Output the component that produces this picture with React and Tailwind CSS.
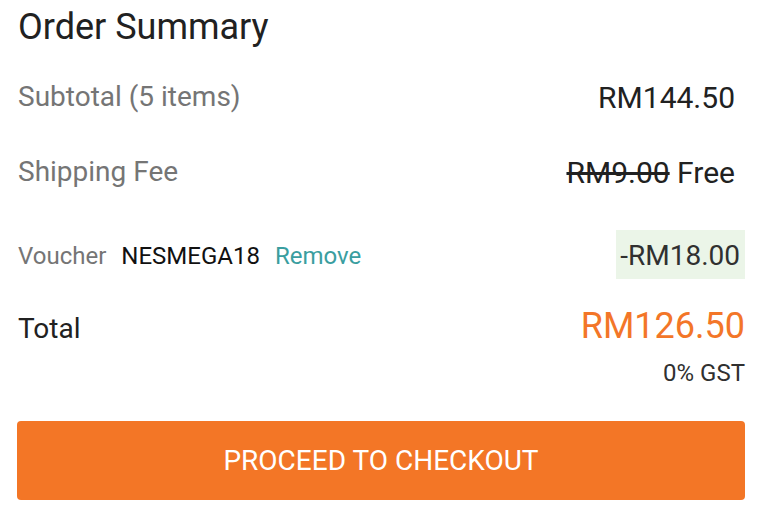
export default function App() {
  return (
    <div className="w-[761px] h-[516px] bg-white overflow-hidden pl-[17px] pr-[16px]" style={{ fontFamily: "Roboto, 'Noto Sans', sans-serif" }}>
      <h1 className="text-[36px] leading-[54px] text-[#212121] pl-[1px]">Order Summary</h1>
      <div className="mt-[28px] h-[30px] flex items-center justify-between pl-[1px] pr-[10px]">
        <span className="text-[28px] text-[#757575]">Subtotal (5 items)</span>
        <span className="text-[30px] text-[#212121]">RM144.50</span>
      </div>
      <div className="mt-[45px] h-[30px] flex items-center justify-between pl-[1px] pr-[10px]">
        <span className="text-[28px] text-[#757575]">Shipping Fee</span>
        <span className="text-[30px] text-[#212121]"><span className="line-through">RM9.00</span> Free</span>
      </div>
      <div className="mt-[43px] h-[49px] flex items-center justify-between pl-[1px]">
        <div className="flex items-center gap-[15px] text-[24px] pt-[3px]">
          <span className="text-[#757575]">Voucher</span>
          <span className="text-[#111]">NESMEGA18</span>
          <span className="text-[#3a9ea0]">Remove</span>
        </div>
        <div className="h-[49px] flex items-center bg-[#ebf5e8] pl-[4px] pr-[5px] pt-[2px] text-[28px] text-[#303030]">-RM18.00</div>
      </div>
      <div className="mt-[27px] h-[40px] flex items-baseline justify-between pl-[1px]">
        <span className="text-[28px] text-[#212121]">Total</span>
        <span className="text-[36px] leading-[40px] text-[#f37628]">RM126.50</span>
      </div>
      <div className="mt-[15px] h-[24px] flex justify-end">
        <span className="text-[24px] leading-[24px] text-[#303030]">0% GST</span>
      </div>
      <button className="mt-[36px] w-full h-[79px] rounded-[4px] bg-[#f37626] text-white text-[28px] flex items-center justify-center">PROCEED TO CHECKOUT</button>
    </div>
  );
}
